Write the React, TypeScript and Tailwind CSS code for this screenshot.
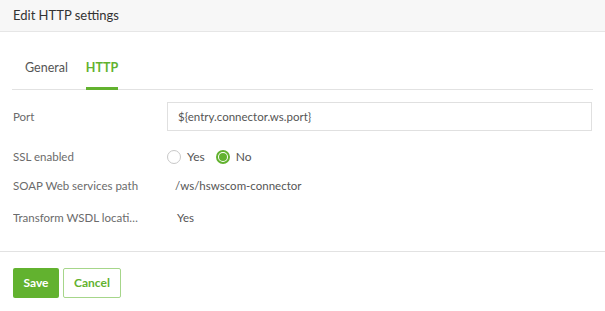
import { useState } from "react";

function Radio({ checked, label, onClick }: { checked: boolean; label: string; onClick: () => void }) {
  return (
    <button type="button" onClick={onClick} className="flex items-center gap-[6px]">
      {checked ? (
        <span className="flex h-[14px] w-[14px] items-center justify-center rounded-full border-2 border-[#62b22f] bg-white">
          <span className="h-[8px] w-[8px] rounded-full bg-[#62b22f]" />
        </span>
      ) : (
        <span className="h-[14px] w-[14px] rounded-full border border-[#c8c8c8] bg-white" />
      )}
      <span className="text-[12px] text-[#555]">{label}</span>
    </button>
  );
}

export default function App() {
  const [tab, setTab] = useState("HTTP");
  const [ssl, setSsl] = useState(false);

  return (
    <div className="h-[311px] w-[605px] overflow-hidden bg-white font-['Lato',sans-serif] text-[11.5px]">
      <div className="flex h-[32px] items-center border-b border-[#e6e6e6] bg-[#f7f7f7] px-[13px] text-[13px] text-[#333]">
        Edit HTTP settings
      </div>

      <div className="mx-[12px] mt-[18px] flex gap-[18px] border-b border-[#e2e2e2] pl-[13px]">
        {["General", "HTTP"].map((t) => (
          <button
            key={t}
            type="button"
            onClick={() => setTab(t)}
            className={
              tab === t
                ? "-mb-px h-[40px] border-b-[3px] border-[#62b22f] text-[12.5px] font-bold text-[#62b22f]"
                : "-mb-px h-[40px] border-b-[3px] border-transparent text-[12.5px] text-[#555]"
            }
          >
            {t}
          </button>
        ))}
      </div>

      <div className="flex flex-col px-[13px] text-[#6b6b6b]">
        <div className="mt-[12px] flex h-[29px] items-center">
          <div className="w-[154px]">Port</div>
          <input
            defaultValue="${entry.connector.ws.port}"
            className="h-[29px] flex-1 border border-[#e0e0e0] px-[10px] text-[11.5px] text-[#555] outline-none"
          />
        </div>
        <div className="mt-[12px] flex h-[28px] items-center">
          <div className="w-[154px]">SSL enabled</div>
          <div className="flex items-center gap-[11px]">
            <Radio checked={ssl} label="Yes" onClick={() => setSsl(true)} />
            <Radio checked={!ssl} label="No" onClick={() => setSsl(false)} />
          </div>
        </div>
        <div className="mt-[1px] flex h-[28px] items-center">
          <div className="w-[154px]">SOAP Web services path</div>
          <div className="pl-[8px] text-[#555]">/ws/hswscom-connector</div>
        </div>
        <div className="mt-[4px] flex h-[28px] items-center">
          <div className="w-[127px] truncate" title="Transform WSDL location">Transform WSDL location</div>
          <div className="pl-[37px] text-[#555]">Yes</div>
        </div>
      </div>

      <div className="mt-[19px] flex gap-[4px] border-t border-[#e2e2e2] px-[13px] pt-[16px]">
        <button type="button" className="h-[30px] w-[46px] rounded-[2px] bg-[#62b22f] text-[12px] font-bold text-white">
          Save
        </button>
        <button
          type="button"
          className="h-[30px] w-[58px] rounded-[2px] border border-[#a6d68a] bg-white text-[12px] font-bold text-[#62b22f]"
        >
          Cancel
        </button>
      </div>
    </div>
  );
}
